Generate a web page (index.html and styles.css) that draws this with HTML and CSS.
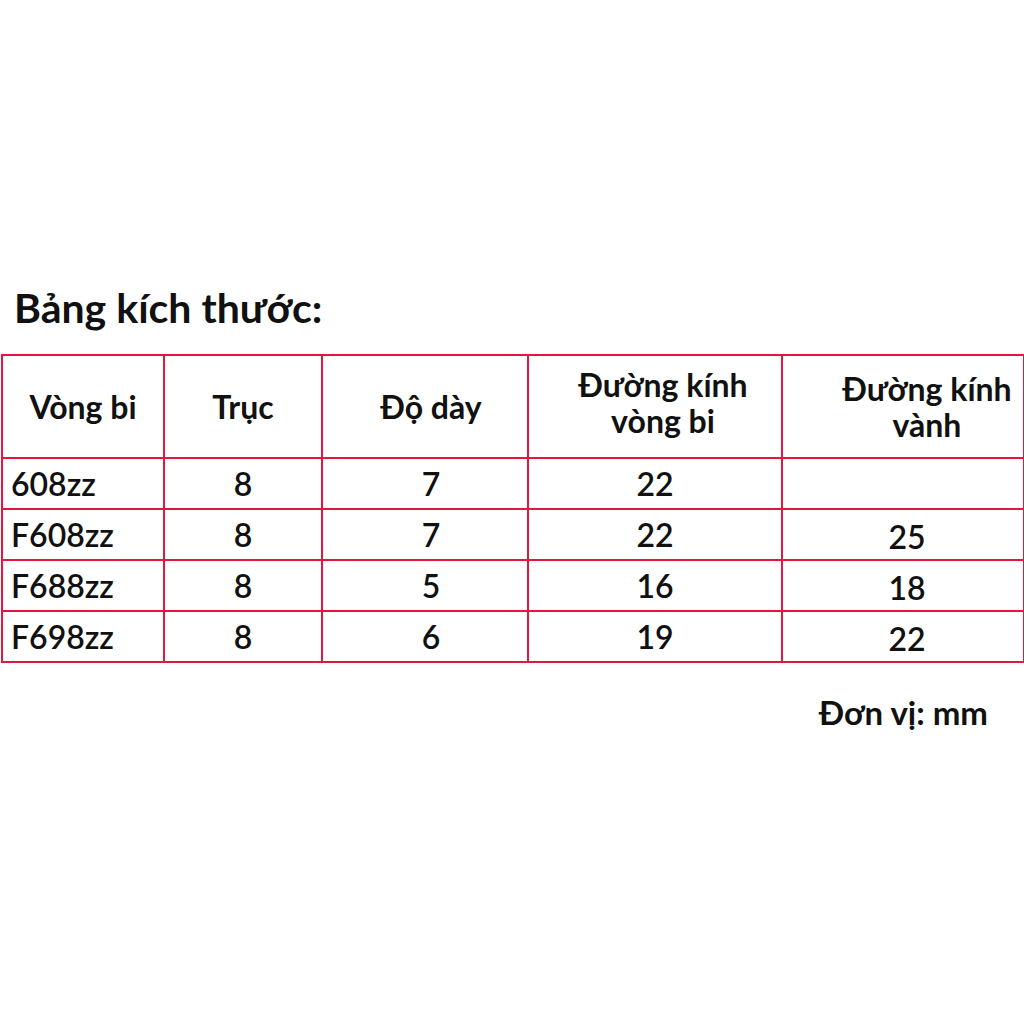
FILE: index.html
```html
<!DOCTYPE html>
<html lang="vi">
<head>
<meta charset="utf-8">
<title>Bảng kích thước</title>
<link rel="stylesheet" href="styles.css">
</head>
<body>
<div class="page">
  <h1 class="title">Bảng kích thước:</h1>
  <table class="sizes">
    <colgroup>
      <col class="c1"><col class="c2"><col class="c3"><col class="c4"><col class="c5">
    </colgroup>
    <thead>
      <tr>
        <th>Vòng bi</th>
        <th>Trục</th>
        <th class="shift">Độ dày</th>
        <th class="h4">Đường kính<br>vòng bi</th>
        <th class="h5">Đường kính<br>vành</th>
      </tr>
    </thead>
    <tbody>
      <tr><td class="name">608zz</td><td>8</td><td class="shift">7</td><td>22</td><td class="v5"></td></tr>
      <tr><td class="name">F608zz</td><td>8</td><td class="shift">7</td><td>22</td><td class="v5">25</td></tr>
      <tr><td class="name">F688zz</td><td>8</td><td class="shift">5</td><td>16</td><td class="v5">18</td></tr>
      <tr><td class="name">F698zz</td><td>8</td><td class="shift">6</td><td>19</td><td class="v5">22</td></tr>
    </tbody>
  </table>
  <p class="unit">Đơn vị: mm</p>
</div>
</body>
</html>
```

FILE: styles.css
```css
html, body {
  margin: 0;
  padding: 0;
  background: #ffffff;
}

body {
  font-family: Lato, "Noto Sans", "Liberation Sans", sans-serif;
  color: #111111;
}

.page {
  width: 1024px;
  height: 1024px;
  padding-top: 283px;
  box-sizing: border-box;
}

.title {
  margin: 0 0 22px 0;
  padding-left: 14px;
  font-size: 41px;
  font-weight: 700;
  line-height: 1.2;
}

.sizes {
  border-collapse: collapse;
  table-layout: fixed;
  width: 1022px;
  margin-left: 1px;
}

.c1 { width: 162px; }
.c2 { width: 158px; }
.c3 { width: 206px; }
.c4 { width: 254px; }
.c5 { width: 242px; }

.sizes th,
.sizes td {
  border: 2px solid #e3173e;
  padding: 0;
  text-align: center;
  vertical-align: middle;
  font-size: 32px;
  line-height: 36px;
}

.sizes th {
  height: 101px;
  font-weight: 700;
}

.sizes td {
  height: 49px;
  font-weight: 600;
}

.sizes .name {
  text-align: left;
  padding-left: 8px;
}

.sizes .shift {
  padding-left: 12px;
}

.sizes .h4 {
  padding-left: 16px;
  padding-bottom: 8px;
  height: 93px;
}

.sizes .h5 {
  padding-left: 48px;
}

.sizes .v5 {
  padding-left: 8px;
  padding-top: 4px;
  height: 45px;
}

.unit {
  margin: 30px 36px 0 0;
  text-align: right;
  font-size: 33px;
  font-weight: 700;
  line-height: 1.2;
}
```
